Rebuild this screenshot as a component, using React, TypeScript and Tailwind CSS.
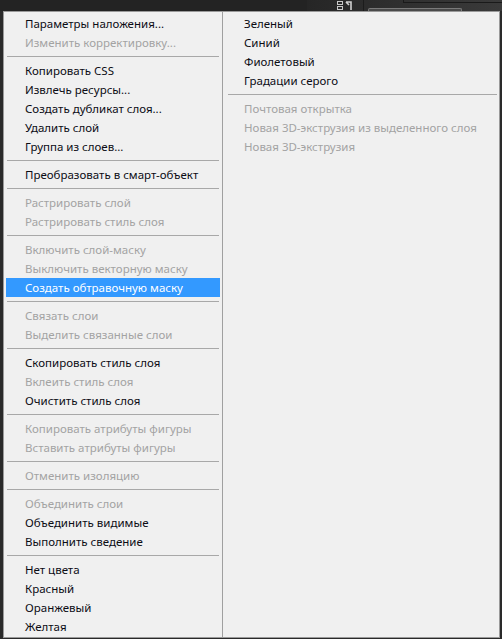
type Item = { label: string; disabled?: boolean; active?: boolean } | "sep";

const leftItems: Item[] = [
  { label: "Параметры наложения..." },
  { label: "Изменить корректировку...", disabled: true },
  "sep",
  { label: "Копировать CSS" },
  { label: "Извлечь ресурсы..." },
  { label: "Создать дубликат слоя..." },
  { label: "Удалить слой" },
  { label: "Группа из слоев..." },
  "sep",
  { label: "Преобразовать в смарт-объект" },
  "sep",
  { label: "Растрировать слой", disabled: true },
  { label: "Растрировать стиль слоя", disabled: true },
  "sep",
  { label: "Включить слой-маску", disabled: true },
  { label: "Выключить векторную маску", disabled: true },
  { label: "Создать обтравочную маску", active: true },
  "sep",
  { label: "Связать слои", disabled: true },
  { label: "Выделить связанные слои", disabled: true },
  "sep",
  { label: "Скопировать стиль слоя" },
  { label: "Вклеить стиль слоя", disabled: true },
  { label: "Очистить стиль слоя" },
  "sep",
  { label: "Копировать атрибуты фигуры", disabled: true },
  { label: "Вставить атрибуты фигуры", disabled: true },
  "sep",
  { label: "Отменить изоляцию", disabled: true },
  "sep",
  { label: "Объединить слои", disabled: true },
  { label: "Объединить видимые" },
  { label: "Выполнить сведение" },
  "sep",
  { label: "Нет цвета" },
  { label: "Красный" },
  { label: "Оранжевый" },
  { label: "Желтая" },
];

const rightItems: Item[] = [
  { label: "Зеленый" },
  { label: "Синий" },
  { label: "Фиолетовый" },
  { label: "Градации серого" },
  "sep",
  { label: "Почтовая открытка", disabled: true },
  { label: "Новая 3D-экструзия из выделенного слоя", disabled: true },
  { label: "Новая 3D-экструзия", disabled: true },
];

const MenuList = ({ items, pad }: { items: Item[]; pad: string }) => (
  <div className="flex flex-col">
    {items.map((it, i) =>
      it === "sep" ? (
        <div key={i} className="my-[4px] mx-[1px] h-px bg-[#a8a8a8]" />
      ) : (
        <div
          key={i}
          className={`h-[19px] leading-[19px] whitespace-nowrap ${pad} ${
            it.active
              ? "bg-[#3399ff] text-white"
              : it.disabled
              ? "text-[#a3a3a3]"
              : "text-[#0c0c14]"
          }`}
        >
          {it.label}
        </div>
      )
    )}
  </div>
);

export default function App() {
  return (
    <div
      className="w-[502px] h-[639px] bg-[#2a2a2a] flex flex-col overflow-hidden text-[11.5px]"
      style={{ fontFamily: '"Noto Sans", "DejaVu Sans", sans-serif' }}
    >
      {/* workspace strip behind the menu */}
      <div className="h-[11px] flex shrink-0">
        <div className="w-[307px] bg-[#232323]" />
        <div className="flex-1 bg-gradient-to-r from-[#262626] to-[#3a3a3a] flex items-start relative">
          <div className="ml-[30px] flex flex-col gap-[1px] pt-[1px]">
            <div className="w-[6px] h-[4px] border border-[#c8c8c8]" />
            <div className="w-[6px] h-[4px] border border-[#c8c8c8]" />
          </div>
          <svg width="8" height="10" viewBox="0 0 8 10" className="ml-[2px] mt-[1px]">
            <path d="M1 1h5v8M1 1l3 3" stroke="#d0d0d0" strokeWidth="1.6" fill="none" />
          </svg>
          <div className="ml-[10px] w-px h-full bg-[#1c1c1c]" />
          <div className="ml-[4px] mt-[8px] w-[94px] h-[3px] rounded-t-[2px] border border-b-0 border-[#7a7a7a] bg-[#4a4a4a]" />
          <div className="absolute left-[96px] right-0 top-0 h-[3px] border-b border-l border-[#1a1a1a]" />
        </div>
      </div>

      <div className="flex-1 flex pl-[3px] pr-[2px] pb-[1px]">
        <div className="flex-1 flex border border-[#9a9a9a] bg-[#f0f0f0]">
          <div className="w-[219px] pl-[2px] pr-[2px] pt-[2px] border-r border-[#a0a0a0]">
            <MenuList items={leftItems} pad="pl-[19px]" />
          </div>
          <div className="flex-1 pt-[2px] pl-[4px] pr-[1px]">
            <MenuList items={rightItems} pad="pl-[17px]" />
          </div>
        </div>
      </div>
    </div>
  );
}
